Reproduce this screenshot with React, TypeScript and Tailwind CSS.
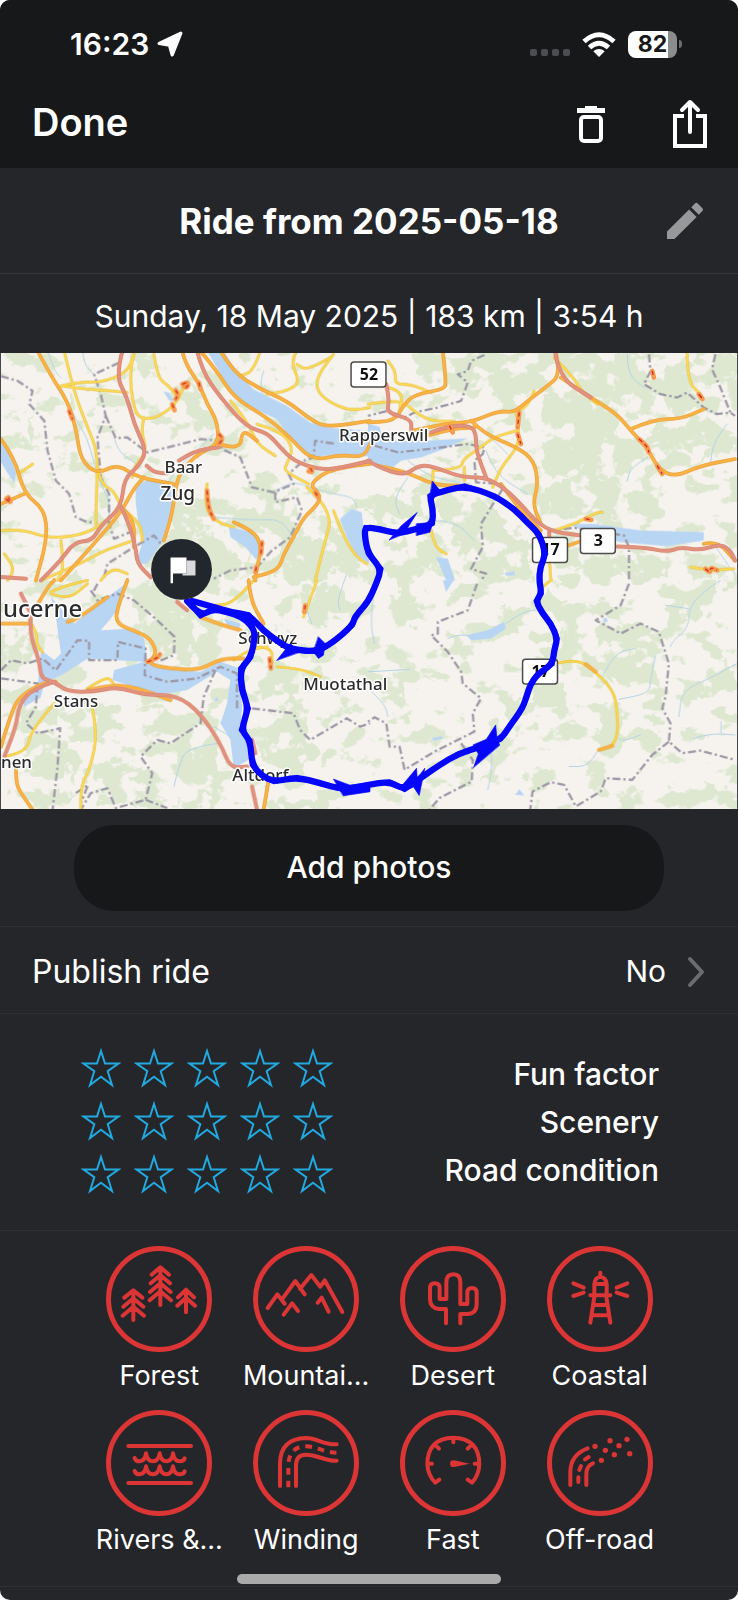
import { useState } from 'react';
import type { ReactNode } from 'react';
import { MdEdit } from 'react-icons/md';

interface Tile {
  x: number;
  y: number;
  woods: string[];
  water: string[];
  streams: string[];
  minor: string[];
  major: string[];
  motorway: string[];
  curvy: string[];
  border: string[];
}

interface Place {
  name: string;
  x: number;
  y: number;
  size: number;
}

interface Tag {
  title: string;
  viewBox: string;
  icon: ReactNode;
}

const ratingOptions = ['Fun factor', 'Scenery', 'Road condition'];

const places: Place[] = [
  { name: 'Baar', x: 164, y: 120, size: 17 },
  { name: 'Zug', x: 160, y: 147, size: 19 },
  { name: 'Rapperswil', x: 339, y: 88, size: 17 },
  { name: 'ucerne', x: 2, y: 265, size: 24 },
  { name: 'Schwyz', x: 238, y: 292, size: 17 },
  { name: 'Muotathal', x: 303, y: 338, size: 17 },
  { name: 'Stans', x: 53, y: 355, size: 17 },
  { name: 'nen', x: 0, y: 416, size: 17 },
  { name: 'Altdorf', x: 232, y: 429, size: 17 },
];

const shields = [
  { name: '52', x: 351, y: 9 },
  { name: '17', x: 533, y: 185 },
  { name: '3', x: 581, y: 176 },
  { name: '17', x: 523, y: 307 },
];

// four quadrants of the map, every path is relative to its own tile
const tiles: Tile[] = [
  {
    x: 0,
    y: 0,
    woods: [
      'M560 120 L610 125 L640 190 L655 240 L630 260 L590 200 L555 150Z',
      'M390 10 L450 0 L470 50 L440 90 L400 80Z',
      'M510 430 L640 520 L760 560 L740 650 L640 690 L520 690 L500 600 L520 520Z',
      'M640 500 L760 440 L900 430 L900 500 L840 560 L780 530Z',
      'M830 600 L930 500 L1010 520 L1080 640 L1080 690 L820 690Z',
      'M90 170 L130 240 L140 300 L100 290Z',
      'M190 90 L230 150 L240 210 L205 180Z',
      'M440 560 L560 540 L580 640 L470 660Z',
    ],
    water: [
      'M620 0 L655 60 L690 120 L740 165 L830 205 L870 262 L925 322 L1000 312 L1110 318 L1110 240 L1000 232 L930 215 L860 165 L760 115 L710 65 L670 0Z',
      'M405 400 L455 385 L530 405 L520 460 L500 520 L485 575 L440 640 L405 640 L430 560 L412 510 L405 455Z',
      'M685 530 L760 545 L785 600 L768 628 L735 590 L690 560Z',
      'M0 280 L22 300 L45 365 L40 397 L15 360 L0 335Z',
      'M1020 505 L1055 475 L1085 485 L1090 530 L1108 640 L1070 615 L1040 560Z',
      'M488 122 L505 125 L520 150 L508 150Z',
    ],
    streams: [
      'M245 0 L250 40 L275 65',
      'M140 0 L160 60 L180 80',
      'M180 110 L215 190 L260 260 L280 340 L300 400 L330 460 L320 540',
      'M340 260 L350 300 L395 330 L420 350',
      'M790 60 L780 90 L785 120',
      'M820 425 L870 390 L930 410 L1000 430 L1060 440 L1070 470',
      'M500 400 L530 350 L590 300 L640 250',
      'M640 500 L760 510 L840 505 L880 560',
    ],
    minor: [
      'M190 0 L215 110 L260 230 L290 300 L288 420 L285 520',
      'M180 105 L240 92 L300 95 L380 65 L400 10',
      'M180 105 L260 115 L330 120 L380 125',
      'M400 10 L385 60 L400 180 L425 205 L470 200 L520 165 L540 130 L555 95',
      'M460 10 L470 80 L505 105 L525 130',
      'M0 540 L60 535 L150 565 L260 550 L330 500',
      'M20 690 L45 660 L10 610',
      'M60 365 L95 340',
      'M290 350 L300 400 L340 420 L360 470 L420 520 L425 570',
      'M430 200 L420 240 L440 300 L400 350 L395 380',
      'M690 150 L740 210 L770 280 L825 315',
      'M770 220 L840 240 L880 290 L860 340 L850 360 L925 400',
      'M890 0 L870 30 L900 95 L860 120 L800 130',
      'M1000 10 L960 60 L945 110 L980 150 L1050 180 L1110 170',
      'M990 20 L920 60 L890 40',
      'M620 400 L610 470 L650 515 L700 530',
      'M920 410 L1000 480 L970 590 L945 690',
      'M1000 480 L1030 560 L1070 620 L1100 640',
      'M180 570 L190 650 L170 690',
      'M120 690 L240 640 L310 600 L400 570',
      'M300 690 L330 650 L380 670',
      'M780 0 L760 60 L720 75',
    ],
    major: [
      'M110 0 L150 75 L200 150 L225 230 L240 330 L290 370 L350 340 L410 380 L520 400',
      'M0 265 L40 320 L70 430 L130 475 L140 560 L105 690',
      'M545 0 L555 40 L595 95 L620 160 L650 210 L655 280 L600 305 L560 340 L530 380 L515 490 L490 570',
      'M655 280 L720 300 L725 235 L770 270',
      'M600 0 L650 60 L700 140 L800 200 L870 260 L935 330 L1020 312 L1090 320 L1110 280',
      'M660 0 L700 65 L780 115 L860 150 L930 205 L980 230 L1110 210',
      'M700 515 L760 540 L785 590 L770 650 L765 690',
      'M1110 340 L1000 350 L925 400 L960 430 L955 460 L910 500 L880 560 L850 610 L835 660 L760 680',
      'M430 380 L400 410 L365 480 L280 580 L180 690',
      'M360 470 L400 500 L400 590',
      'M0 460 L70 430',
    ],
    motorway: [
      'M365 0 L345 75 L380 140 L400 220 L438 300 L415 345 L370 385 L362 470 L300 525 L275 570 L220 575 L180 630 L120 690',
      'M362 470 L385 520 L405 590 L410 640 L450 680',
      'M500 368 L465 368 L438 345',
      'M535 330 L580 300 L655 290',
      'M590 0 L605 60 L660 140 L740 230 L800 245 L840 290 L880 330 L960 358 L1030 350 L1110 330',
      'M0 680 L75 685',
    ],
    curvy: [
      'M545 100 L565 90 L560 112 L548 104',
      'M525 118 L535 130 L525 145',
      'M515 160 L522 178',
      'M655 250 L670 262 L655 280',
      'M620 420 L622 470 L640 505',
      'M930 352 L940 365 L925 362',
      'M15 445 L32 460 L22 440',
      'M785 575 L782 610',
      'M768 650 L765 665',
      'M945 425 L955 440',
      'M205 180 L215 205',
      'M595 95 L600 115',
    ],
    border: [
      'M0 75 L50 90 L95 120 L85 160 L130 210 L140 300 L165 390 L205 430 L225 500 L260 515 L290 515',
      'M355 35 L280 70 L300 130 L315 195 L290 260 L300 380 L325 430 L325 520 L340 565 L400 540',
      'M315 195 L345 262 L380 260 L440 305 L520 285 L600 265 L660 270 L665 295 L720 320 L755 410 L820 425 L880 400 L865 370 L910 330 L940 320 L945 270 L1010 280',
      'M825 425 L825 455 L890 440 L905 480 L870 560 L815 600 L770 650 L690 660 L640 685',
      'M310 680 L320 640 L400 590 L460 555 L490 590',
    ],
  },
  {
    x: 1104,
    y: 0,
    woods: [
      'M150 20 L300 10 L520 20 L540 90 L420 150 L260 130 L150 90Z',
      'M560 20 L800 10 L1110 10 L1110 190 L960 170 L800 200 L690 140 L600 80Z',
      'M490 120 L620 110 L760 210 L830 320 L800 380 L640 420 L540 380 L500 280Z',
      'M840 220 L1020 200 L1110 240 L1110 310 L920 360 L850 280Z',
      'M520 420 L640 400 L780 400 L900 420 L760 500 L600 510 L540 480Z',
      'M210 430 L340 440 L460 540 L500 640 L480 690 L340 690 L250 560Z',
      'M0 440 L150 430 L170 500 L60 520 L0 500Z',
      'M560 570 L760 600 L1000 610 L1110 690 L560 690Z',
      'M940 390 L1110 380 L1110 420 L960 420Z',
      'M60 560 L180 560 L200 690 L80 690Z',
    ],
    water: [
      'M0 255 L60 270 L180 270 L300 262 L240 290 L160 320 L100 330 L70 355 L0 335Z',
      'M0 218 L35 228 L45 272 L0 272Z',
      'M600 520 L680 520 L820 540 L1010 545 L1010 570 L900 587 L760 575 L660 545Z',
      'M205 620 L240 625 L262 690 L235 690Z',
      'M410 668 L440 662 L442 674 L415 676Z',
    ],
    streams: [
      'M780 10 L780 70 L830 110',
      'M340 240 L380 270 L420 310',
      'M355 300 L380 370 L480 430',
      'M120 330 L170 370 L240 390 L310 400',
      'M120 380 L75 440 L95 490',
      'M840 320 L790 350 L780 390',
      'M1080 220 L1040 270 L1030 340',
      'M200 510 L260 510 L320 570',
      'M1040 580 L1080 640 L1104 670',
    ],
    minor: [
      'M60 30 L85 60 L80 100 L130 100 L190 125',
      'M0 160 L60 150 L110 155 L150 190 L190 210 L260 212',
      'M60 110 L105 120 L95 180',
      'M195 360 L280 355 L285 325 L340 290 L375 260 L445 240',
      'M445 180 L455 240 L450 290 L400 350 L375 410',
      'M290 350 L290 390',
      'M195 365 L195 400',
      'M560 20 L620 80 L640 120 L690 160',
      'M500 120 L480 170 L440 180',
      'M560 540 L620 520 L650 505 L690 485 L705 485',
      'M190 540 L200 590 L235 610',
      'M960 0 L960 90 L1000 130',
      'M545 620 L550 690',
      'M970 650 L1020 660 L1100 655',
    ],
    major: [
      'M225 0 L235 90 L230 115 L140 130 L105 165 L80 210 L0 215',
      'M130 240 L245 215 L310 215 L390 180 L440 185 L480 150 L540 105 L575 75 L565 0',
      'M310 210 L350 250 L450 290 L500 330 L512 400 L495 460 L520 520',
      'M580 80 L670 140 L750 190 L790 240 L840 290 L870 350 L920 380 L1000 345 L1104 325',
      'M790 235 L860 205 L940 205 L1010 175',
      'M160 260 L245 235 L320 230',
      'M30 345 L110 360 L200 405 L300 405',
      'M400 400 L450 470 L520 540',
      'M560 600 L640 572',
      'M1010 580 L1050 570 L1104 630',
    ],
    motorway: [
      'M0 330 L30 350 L110 375 L150 345 L190 345 L280 380 L350 380 L400 405 L450 450 L530 540 L640 555',
      'M55 100 L65 150 L55 185 L130 205 L130 235',
      'M190 245 L240 225 L310 225 L325 250 L325 300 L355 380',
      'M562 0 L575 80 L670 140',
      'M750 588 L830 590 L900 605 L940 590 L1000 600 L1060 580 L1090 600 L1104 630',
      'M545 545 L545 600',
    ],
    curvy: [
      'M455 185 L450 230',
      'M450 250 L460 280',
      'M995 130 L1010 150 L1000 135',
      'M815 265 L840 285 L845 305',
      'M870 345 L885 370',
      'M655 505 L672 508',
      'M1015 655 L1030 670 L1030 650 L1050 660',
      'M245 225 L255 245',
      'M855 60 L860 80',
    ],
    border: [
      'M350 12 L310 30 L300 60 L270 70 L300 95 L280 150 L210 170 L140 185 L110 200 L60 180 L0 195',
      'M20 285 L90 305 L180 295 L300 280 L350 290 L345 310 L320 330 L325 395 L400 400',
      'M405 415 L370 470 L340 520 L345 590 L310 655 L355 670 L340 690',
      'M845 10 L850 60 L830 100 L880 130 L930 140 L960 125 L1010 170 L1050 190 L1090 185 L1104 195',
      'M1045 10 L1035 55 L1060 110 L1090 185',
      'M540 540 L620 532 L770 555 L785 590 L785 690',
    ],
  },
  {
    x: 0,
    y: 690,
    woods: [
      'M380 30 L480 10 L540 70 L660 110 L640 180 L580 240 L460 230 L420 150Z',
      'M200 420 L240 370 L400 370 L480 390 L560 400 L600 470 L520 520 L420 440 L240 470Z',
      'M40 380 L150 370 L170 460 L60 460Z',
      'M60 480 L200 470 L240 560 L200 670 L100 640Z',
      'M480 400 L640 420 L690 560 L640 640 L520 560Z',
      'M760 270 L900 250 L1000 300 L940 370 L780 370Z',
      'M780 430 L900 420 L960 520 L880 580 L780 560Z',
      'M270 550 L440 560 L420 670 L290 680Z',
      'M800 620 L1000 640 L960 690 L800 690Z',
      'M0 140 L90 170 L90 260 L0 300Z',
      'M900 20 L1060 0 L1040 80 L960 140 L880 120Z',
      'M520 590 L640 620 L720 680 L520 690Z',
    ],
    water: [
      'M375 10 L350 90 L300 150 L395 145 L430 175 L440 240 L500 265 L600 275 L660 245 L720 265 L720 320 L725 380 L720 450 L745 480 L745 540 L700 565 L690 480 L660 430 L680 370 L690 300 L650 275 L560 330 L470 345 L400 320 L335 300 L340 270 L430 245 L260 235 L190 280 L130 310 L120 350 L70 380 L60 355 L110 320 L120 210 L160 240 L180 220 L165 110 L150 50 L220 130 L320 50Z',
      'M670 115 L720 130 L715 155 L680 135Z',
      'M640 360 L650 350 L655 365Z',
    ],
    streams: [
      'M660 490 L560 500 L535 560 L520 620',
      'M1040 -20 L1010 60 L1020 90',
      'M920 90 L935 130',
      'M640 440 L690 470',
    ],
    minor: [
      'M150 35 L180 20 L260 0',
      'M150 40 L200 60 L260 10',
      'M85 120 L110 160 L105 190 L125 215',
      'M260 325 L320 285 L340 315',
      'M160 370 L90 450 L80 510 L15 530',
      'M275 385 L290 460 L270 560 L240 620 L240 690',
      'M830 260 L900 265 L960 290',
      'M770 200 L815 200 L815 250',
      'M950 0 L910 110',
      'M700 240 L740 210 L800 200',
      'M760 0 L700 70 L640 75',
    ],
    major: [
      'M380 0 L350 80 L345 130 L410 155 L450 175 L470 220 L440 250 L500 265 L600 270 L660 235 L730 235',
      'M0 130 L85 130',
      'M0 500 L30 400 L55 350 L120 310 L165 305',
      'M260 330 L330 315 L400 320 L510 360',
      'M745 0 L750 60 L790 130',
      'M600 110 L650 130 L720 150',
      'M790 690 L805 600',
      'M45 560 L45 610 L60 640 L95 690',
      'M100 90 L140 20 L160 0',
      'M320 50 L240 110 L200 125',
    ],
    motorway: [
      'M90 100 L85 160 L115 240 L120 295 L160 305 L200 335 L280 335 L350 320 L430 345 L530 345 L600 400 L660 490 L690 565 L740 560',
      'M160 305 L100 325 L55 370 L45 440 L10 530',
      'M755 480 L765 520',
      'M755 620 L770 690',
      'M530 65 L560 90',
      'M60 40 L90 100',
    ],
    curvy: [
      'M440 245 L470 235 L478 222',
      'M808 235 L812 265',
      'M915 75 L912 95',
    ],
    border: [
      'M0 270 L30 240 L80 250 L125 235 L165 270 L230 180 L265 182 L265 240 L350 240 L352 185 L435 205 L432 285 L500 305 L590 295 L660 260 L710 280 L710 385',
      'M0 295 L110 310 L105 380 L75 430 L110 460 L178 445 L170 560 L155 690',
      'M270 30 L290 60 L350 40 L400 60 L470 120 L522 170 L520 225 L470 245',
      'M645 270 L610 350 L600 430 L510 490 L470 480 L420 530 L455 580 L435 660 L345 685 L320 625 L270 640 L240 690',
      'M435 660 L500 685',
      'M755 385 L880 400 L900 450 L930 480 L1040 415 L1080 440 L1110 430',
      'M225 640 L262 615 L240 670',
      'M290 10 L275 40',
    ],
  },
  {
    x: 1104,
    y: 690,
    woods: [
      'M230 160 L340 130 L420 90 L500 70 L500 110 L400 190 L260 200Z',
      'M540 10 L600 70 L640 170 L740 220 L740 320 L620 240 L600 330 L600 390 L500 380 L430 500 L340 640 L330 540 L400 420 L460 330 L560 200Z',
      'M690 150 L880 150 L880 290 L780 330 L700 260Z',
      'M730 340 L790 420 L860 440 L760 520 L700 520 L720 430Z',
      'M900 80 L1040 10 L1100 20 L1000 90 L960 160 L900 180Z',
      'M920 320 L1000 290 L1110 240 L1110 300 L980 340Z',
      'M980 480 L1110 450 L1110 480Z',
      'M70 0 L180 0 L160 60 L100 140Z',
      'M0 250 L110 270 L100 350 L40 360 L0 320Z',
      'M200 560 L310 520 L400 470 L390 540 L330 560Z',
      'M890 640 L1000 680 L890 690Z',
      'M340 560 L380 560 L370 650 L340 640Z',
    ],
    water: [
      'M295 165 L360 150 L410 125 L415 145 L370 175 L310 180Z',
      'M225 0 L258 0 L235 35Z',
      'M190 476 L220 468 L225 475 L200 483Z',
      'M443 645 L455 628 L470 648Z',
      'M708 115 L718 112 L720 125 L708 126Z',
    ],
    streams: [
      'M240 175 L260 165 L300 165',
      'M415 130 L465 95 L500 90',
      'M1060 0 L1000 40 L965 85 L965 140 L915 185 L910 200',
      'M895 75 L965 85',
      'M1110 250 L1030 295 L945 330 L935 410',
      'M865 225 L850 300 L845 340 L755 358',
      'M710 280 L740 220 L800 205',
      'M820 465 L770 485 L755 475',
      'M690 515 L665 560 L605 560',
      'M980 475 L1030 460 L1104 465',
      'M1062 425 L1062 460',
      'M370 510 L375 560 L360 630',
      'M20 20 L5 120 L20 190',
      'M0 275 L125 268',
      'M5 330 L50 370 L60 410',
    ],
    minor: [
      'M550 0 L525 20',
      'M575 248 L620 238 L665 258 L740 330 L750 400 L752 460 L735 500 L695 510',
    ],
    major: ['M655 252 L685 275', 'M695 510 L735 498'],
    motorway: [],
    curvy: [],
    border: [
      'M328 10 L300 90 L210 125 L210 160 L190 165 L240 215 L280 275 L285 310 L340 355 L315 400 L320 455 L200 515 L110 570 L95 500 L65 500 L55 430 L20 412 L0 425',
      'M280 490 L315 540 L312 605 L215 655 L185 690',
      'M785 10 L760 75 L685 120 L760 160 L820 130 L875 155 L905 250 L895 350 L885 385 L910 430 L905 485 L945 520 L1000 512 L1104 540',
      'M905 485 L855 525 L795 600 L715 595 L700 635 L625 680 L590 615 L550 607 L495 635 L488 690',
    ],
  },
];

const route =
  'M560 752 L600 798 L636 776 L680 785 L722 798 L755 828 L765 855 L752 922 L720 955 L724 1020 L745 1075 L722 1140 L750 1172 L755 1245 L785 1278 L822 1296 L890 1282 L960 1300 L1030 1320 L1104 1305 L1169 1295 L1214 1320 L1269 1280 L1320 1245 L1374 1212 L1444 1190 L1504 1168 L1529 1130 L1569 1075 L1584 1030 L1592 1005 L1614 972 L1659 942 L1664 900 L1674 865 L1654 820 L1629 790 L1609 752 L1626 730 L1619 690 L1622 650 L1639 610 L1619 550 L1582 515 L1544 475 L1484 435 L1394 405 L1319 425 L1289 435 L1299 475 L1299 520 L1254 535 L1189 550 L1139 535 L1096 530 L1094 555 L1104 610 L1144 655 L1129 700 L1104 755 L1064 800 L1058 825 L1000 875 L950 905 L870 897 L835 875 L790 842 L745 792 L690 786 L640 770 L575 752';

const routeSpikes = [
  'M1168 568 L1205 525 L1252 486 L1212 550Z',
  'M1250 520 L1300 515 L1290 545 L1250 555Z',
  'M1298 392 L1325 425 L1290 440Z',
  'M830 930 L870 880 L900 905Z',
  'M955 860 L975 880 L970 915 L955 925 L940 905Z',
  'M1001 1288 L1050 1306 L1110 1298 L1110 1326 L1030 1338Z',
  'M1204 1310 L1250 1255 L1252 1285 L1275 1255 L1258 1337 L1240 1310Z',
  'M1422 1252 L1436 1212 L1420 1185 L1460 1168 L1488 1125 L1492 1165 L1500 1185Z',
];

const tags: Tag[] = [
  {
    title: 'Forest',
    viewBox: '63 66 288 288',
    icon: (
      <path d="M211 228V116M185 137L211 115L237 137M182 163L211 139L240 163M180 189L211 163L242 189M179 214L211 187L243 214M130 273V185M103 206L130 184L157 206M100 233L130 208L160 233M98 260L130 233L162 260M288 250V183M264 205L288 182L312 205M262 230L288 206L315 230" />
    ),
  },
  {
    title: 'Mountai...',
    viewBox: '506 59 288 288',
    icon: (
      <path d="M535 230L564 189L586 217M583 250L608 216L626 239M578 204L618 149L646 189M632 172L666 131L693 166L706 147L759 242M685 214L697 199L718 241" />
    ),
  },
  {
    title: 'Desert',
    viewBox: '78 59 288 288',
    icon: (
      <path d="M201 276V233H180Q153 230 153 203V170Q153 156 167 156Q182 156 182 170V203H202V153Q202 129 223 129Q244 129 244 153V218H265V184Q265 170 279 170Q293 170 293 184V218Q293 247 265 248H244V276" />
    ),
  },
  {
    title: 'Coastal',
    viewBox: '514 59 288 288',
    icon: (
      <path d="M629 274L642 190M689 274L676 190M641 190V158Q643 138 659 136Q676 138 678 158V190M659 124V136M641 158H678M629 192H689M638 221H680M634 252H684M578 156L609 169M578 194L609 184M740 156L708 169M740 194L708 184" />
    ),
  },
  {
    title: 'Rivers &...',
    viewBox: '62 61 288 288',
    icon: (
      <path d="M114 154H302M114 265H302M133 190Q137 201 148 200Q164 199 167 176Q171 200 188 200Q204 199 208 176Q212 200 229 200Q245 199 248 176Q252 200 268 200Q280 200 283 191M133 229Q137 240 148 239Q164 238 167 215Q171 239 188 239Q204 238 208 215Q212 239 229 239Q245 238 248 215Q252 239 268 239Q280 239 283 230" />
    ),
  },
  {
    title: 'Winding',
    viewBox: '506 61 288 288',
    icon: (
      <>
        <path d="M572 274V206Q573 132 650 130C686 130 700 151 742 149M620 274V210Q621 180 650 180C686 180 706 200 742 198" />
        <path strokeLinecap="butt" strokeDasharray="20 18" d="M597 278V210Q600 155 650 155C686 156 706 175 746 174" />
      </>
    ),
  },
  {
    title: 'Fast',
    viewBox: '78 61 288 288',
    icon: (
      <>
        <path d="M181 255L169 264Q146 241 145 208Q146 131 223 129Q300 131 301 208Q300 241 279 264L266 255M223 131V143M173 155L180 162M273 155L266 162M148 207H159M298 207H287" />
        <path fill="#dc3535" stroke="none" d="M272 207L226 217Q213 218 213 207Q213 196 226 197Z" />
      </>
    ),
  },
  {
    title: 'Off-road',
    viewBox: '514 55 288 288',
    icon: (
      <>
        <path d="M569 265V225Q570 174 621 155M617 265V232Q617 208 637 200" />
        <path d="M593 256V242M596 220L601 208M613 188L624 181" />
        <path strokeWidth={16} d="M643 149h.1M674 161h.1M662 191h.1M688 132h.1M701 174h.1M715 147h.1M739 128h.1M747 171h.1" />
      </>
    ),
  },
];

// rounds the corners of an open "M x y L x y" path, closed shapes stay as they are
function smooth(d: string) {
  if (d.endsWith('Z')) return d;
  const points = d
    .slice(1)
    .split('L')
    .map((pair) => pair.trim().split(' ').map(Number));
  let result = `M${points[0].join(' ')}`;
  for (let i = 1; i < points.length - 1; i++) {
    const [x, y] = points[i];
    const [nextX, nextY] = points[i + 1];
    result += `Q${x} ${y} ${(x + nextX) / 2} ${(y + nextY) / 2}`;
  }
  return `${result}L${points[points.length - 1].join(' ')}`;
}

function Layer({ name, ...rest }: { name: keyof Omit<Tile, 'x' | 'y'>; [key: string]: unknown }) {
  return (
    <g strokeLinecap="round" strokeLinejoin="round" {...rest}>
      {tiles.map((tile, index) => (
        <g key={index} transform={`translate(${tile.x} ${tile.y})`}>
          {tile[name].map((d) => (
            <path key={d} d={name === 'border' ? d : smooth(d)} />
          ))}
        </g>
      ))}
    </g>
  );
}

function RideMap() {
  return (
    <svg
      viewBox="0 0 738 457"
      role="img"
      aria-label="Map of the ride"
      className="block w-full border-x border-[#46474a] bg-[#f6f3ef] font-['Noto_Sans',sans-serif]"
    >
      <defs>
        <filter id="woods" x="0" y="0" width="100%" height="100%" colorInterpolationFilters="sRGB">
          <feTurbulence type="fractalNoise" baseFrequency="0.012 0.016" numOctaves="4" seed="8" />
          <feColorMatrix values="0 0 0 0 0.87  0 0 0 0 0.91  0 0 0 0 0.82  16 0 0 0 -9.1" />
          <feComposite operator="in" in2="SourceAlpha" />
        </filter>
        <filter id="dense" x="0" y="0" width="100%" height="100%" colorInterpolationFilters="sRGB">
          <feTurbulence type="fractalNoise" baseFrequency="0.014" numOctaves="4" seed="3" result="noise" />
          <feDisplacementMap in="SourceGraphic" in2="noise" scale="110" xChannelSelector="R" yChannelSelector="G" result="shape" />
          <feColorMatrix in="noise" values="0 0 0 0 0.87  0 0 0 0 0.91  0 0 0 0 0.82  0 0 16 0 -6.4" />
          <feComposite operator="in" in2="shape" />
        </filter>
      </defs>
      <g transform="scale(0.33333) translate(0 -6)" fill="none">
        <rect width="2214" height="1380" fill="#000" filter="url(#woods)" />
        <Layer name="woods" fill="#dde8d1" filter="url(#dense)" />
        <Layer name="water" fill="#b9d5f4" />
        <Layer name="streams" stroke="#b5d3e4" strokeWidth={3} />
        <Layer name="border" stroke="#9d99a6" strokeWidth={7} strokeLinecap="butt" strokeDasharray="24 9 7 9" />
        <Layer name="minor" stroke="#e8bf3c" strokeWidth={8} />
        <Layer name="minor" stroke="#fadb57" strokeWidth={5} />
        <Layer name="major" stroke="#e6a03a" strokeWidth={11} />
        <Layer name="major" stroke="#fbb445" strokeWidth={7} />
        <Layer name="motorway" stroke="#d98673" strokeWidth={12} />
        <Layer name="motorway" stroke="#e2937e" strokeWidth={7} />
        <Layer name="curvy" stroke="#f79a50" strokeWidth={14} />
        <Layer name="curvy" stroke="#cf2a1c" strokeWidth={4} strokeLinecap="butt" strokeDasharray="12 10" />
      </g>
      {places.map(({ name, x, y, size }) => (
        <text key={name} x={x} y={y} fontSize={size} fontWeight={500} fill="#2b2b2b" stroke="#fff" strokeWidth={3} strokeLinejoin="round" paintOrder="stroke">
          {name}
        </text>
      ))}
      {shields.map(({ name, x, y }) => (
        <g key={`${x}-${y}`}>
          <rect x={x} y={y} width={35} height={25} rx={3} fill="#fff" stroke="#4b4b4b" strokeWidth={1.5} />
          <text x={x + 18} y={y + 18} fontSize={16} fontWeight={700} textAnchor="middle" fill="#111">
            {name}
          </text>
        </g>
      ))}
      <g transform="scale(0.33333) translate(0 -6)" stroke="#0606fa" strokeLinejoin="round" strokeLinecap="round">
        <path d={smooth(route)} fill="none" strokeWidth={19} />
        {/* gps jitter along the track */}
        <path d={route} fill="none" strokeWidth={14} />
        {routeSpikes.map((d) => (
          <path key={d} d={d} fill="#0606fa" strokeWidth={2} />
        ))}
      </g>
      <circle cx={181} cy={217} r={30.5} fill="#22262d" />
      <path d="M170 205h16v16h-13.500v10h-2.500z" fill="#fff" />
      <path d="M186 208h9v15h-13v-2h4z" fill="#d9dadb" />
    </svg>
  );
}

function StatusBar() {
  return (
    <div className="flex h-[88px] items-center justify-between pl-[70px] pr-14">
      <div className="flex items-center gap-2">
        <span className="text-[30px] font-semibold leading-9">16:23</span>
        <svg viewBox="0 0 24 24" className="size-[26px]" fill="#fff" stroke="#fff" strokeWidth={3} strokeLinejoin="round">
          <path d="M22 2L2 11.500L11.500 13L14 22Z" />
        </svg>
      </div>
      <div className="flex items-center gap-3">
        <div className="flex gap-1 pt-4">
          {[0, 1, 2, 3].map((dot) => (
            <span key={dot} className="size-[7px] rounded-xs bg-[#4c4d50]" />
          ))}
        </div>
        <svg viewBox="0 0 34 25" className="h-[25px] w-[34px]" fill="none" stroke="#fff" strokeWidth={5}>
          <path d="M2 9.500Q17 -4 32 9.500M7.500 15.500Q17 7 26.500 15.500" />
          <path d="M17 25L11.300 19.300Q17 14.800 22.700 19.300Z" fill="#fff" stroke="none" />
        </svg>
        <div className="flex items-center gap-0.5">
          <div className="flex h-[27px] w-[49px] items-center justify-center rounded-lg bg-linear-to-r from-white from-82% to-[#8b8c8e] to-82% text-[23px] font-bold leading-none text-[#17181a]">
            82
          </div>
          <span className="h-2 w-[3px] rounded-r-full bg-[#6b6c6e]" />
        </div>
      </div>
    </div>
  );
}

function Header() {
  return (
    <header className="bg-[#17181a] pb-3">
      <StatusBar />
      <div className="flex h-[68px] items-center justify-between pl-8 pr-[30px]">
        <button type="button" className="text-[38px] font-semibold leading-10">
          Done
        </button>
        <div className="flex items-center gap-[66px] pt-1">
          <button type="button" aria-label="Delete ride">
            <svg viewBox="0 0 30 48" className="h-12 w-[30px]" fill="none" stroke="#fff" strokeWidth={4}>
              <path d="M1 10.500H29" strokeWidth={5} />
              <path d="M9 8H21" />
              <rect x={5} y={17} width={20} height={24} rx={3} />
            </svg>
          </button>
          <button type="button" aria-label="Share ride">
            <svg viewBox="0 0 36 50" className="h-[50px] w-9" fill="none" stroke="#fff" strokeWidth={4}>
              <path d="M12 17H3V47H33V17H24" />
              <path d="M18 33V4M10 11L18 3L26 11" strokeLinecap="round" strokeLinejoin="round" />
            </svg>
          </button>
        </div>
      </div>
    </header>
  );
}

function Ratings() {
  const [ratings, setRatings] = useState<number[]>([0, 0, 0]);

  return (
    <section className="flex h-[217px] items-start justify-between border-b border-[#2f3033] pl-[74px] pr-[79px] pt-7">
      <div className="grid grid-cols-5">
        {ratingOptions.map((title, row) =>
          [1, 2, 3, 4, 5].map((value) => (
            <button
              key={`${title}-${value}`}
              type="button"
              aria-label={`${title} ${value}`}
              className="flex size-[53px] items-center justify-center"
              onClick={() => setRatings(ratings.map((item, index) => (index === row ? value : item)))}
            >
              <svg viewBox="0 0 40 40" className="size-10" fill={ratings[row] >= value ? '#22a9e0' : 'none'} stroke="#22a9e0" strokeWidth={2}>
                <path d="M20 3L24 15.500H37.500L26.700 23.200L31 37L20 28.700L9 37L13.300 23.200L2.500 15.500H16Z" />
              </svg>
            </button>
          )),
        )}
      </div>
      <ul className="pt-2 text-right text-[30px] font-medium leading-[48px]">
        {ratingOptions.map((title) => (
          <li key={title}>{title}</li>
        ))}
      </ul>
    </section>
  );
}

function Tags() {
  return (
    <section className="grid grid-cols-4 gap-y-4 border-b border-[#2f3033] pb-7 pl-[86px] pr-[65px] pt-[15px]">
      {tags.map(({ title, viewBox, icon }) => (
        <button key={title} type="button" className="flex flex-col items-center gap-1.5">
          <span className="size-[106px] rounded-full border-5 border-[#dc3535]">
            <svg viewBox={viewBox} className="size-full" fill="none" stroke="#dc3535" strokeWidth={12} strokeLinecap="round" strokeLinejoin="round">
              {icon}
            </svg>
          </span>
          <span className="whitespace-nowrap text-[27px] leading-9">{title}</span>
        </button>
      ))}
    </section>
  );
}

export default function App() {
  return (
    <div className="bg-white">
      <main className="relative min-h-screen overflow-hidden rounded-[10px] bg-[#25262a] font-[Inter,sans-serif] text-white">
        <Header />
        <div className="relative flex h-[106px] items-center justify-center border-b border-[#38393c]">
          <h1 className="text-[35px] font-bold leading-10">Ride from 2025-05-18</h1>
          <button type="button" aria-label="Edit title" className="absolute right-[29px]">
            <MdEdit className="size-12 text-[#97989a]" />
          </button>
        </div>
        <p className="flex h-[79px] items-center justify-center pt-1 text-[30px] leading-9">Sunday, 18 May 2025 | 183 km | 3:54 h</p>
        <RideMap />
        <div className="border-b border-[#2f3033] px-[74px] pb-[15px] pt-4">
          <button type="button" className="h-[86px] w-full rounded-[40px] bg-[#17181a] text-[30px] font-medium">
            Add photos
          </button>
        </div>
        <button type="button" className="flex h-[87px] w-full items-center justify-between border-b border-[#2f3033] px-8 pt-1 text-[32px]">
          <span>Publish ride</span>
          <span className="flex items-center gap-5 text-[30px]">
            No
            <svg viewBox="0 0 20 32" className="h-8 w-5" fill="none" stroke="#6b6c6f" strokeWidth={4} strokeLinecap="round" strokeLinejoin="round">
              <path d="M4 3L16 16L4 29" />
            </svg>
          </span>
        </button>
        <Ratings />
        <Tags />
        <div className="absolute bottom-4 left-1/2 h-2.5 w-[264px] -translate-x-1/2 rounded-full bg-[#aaaaab]" />
      </main>
    </div>
  );
}
